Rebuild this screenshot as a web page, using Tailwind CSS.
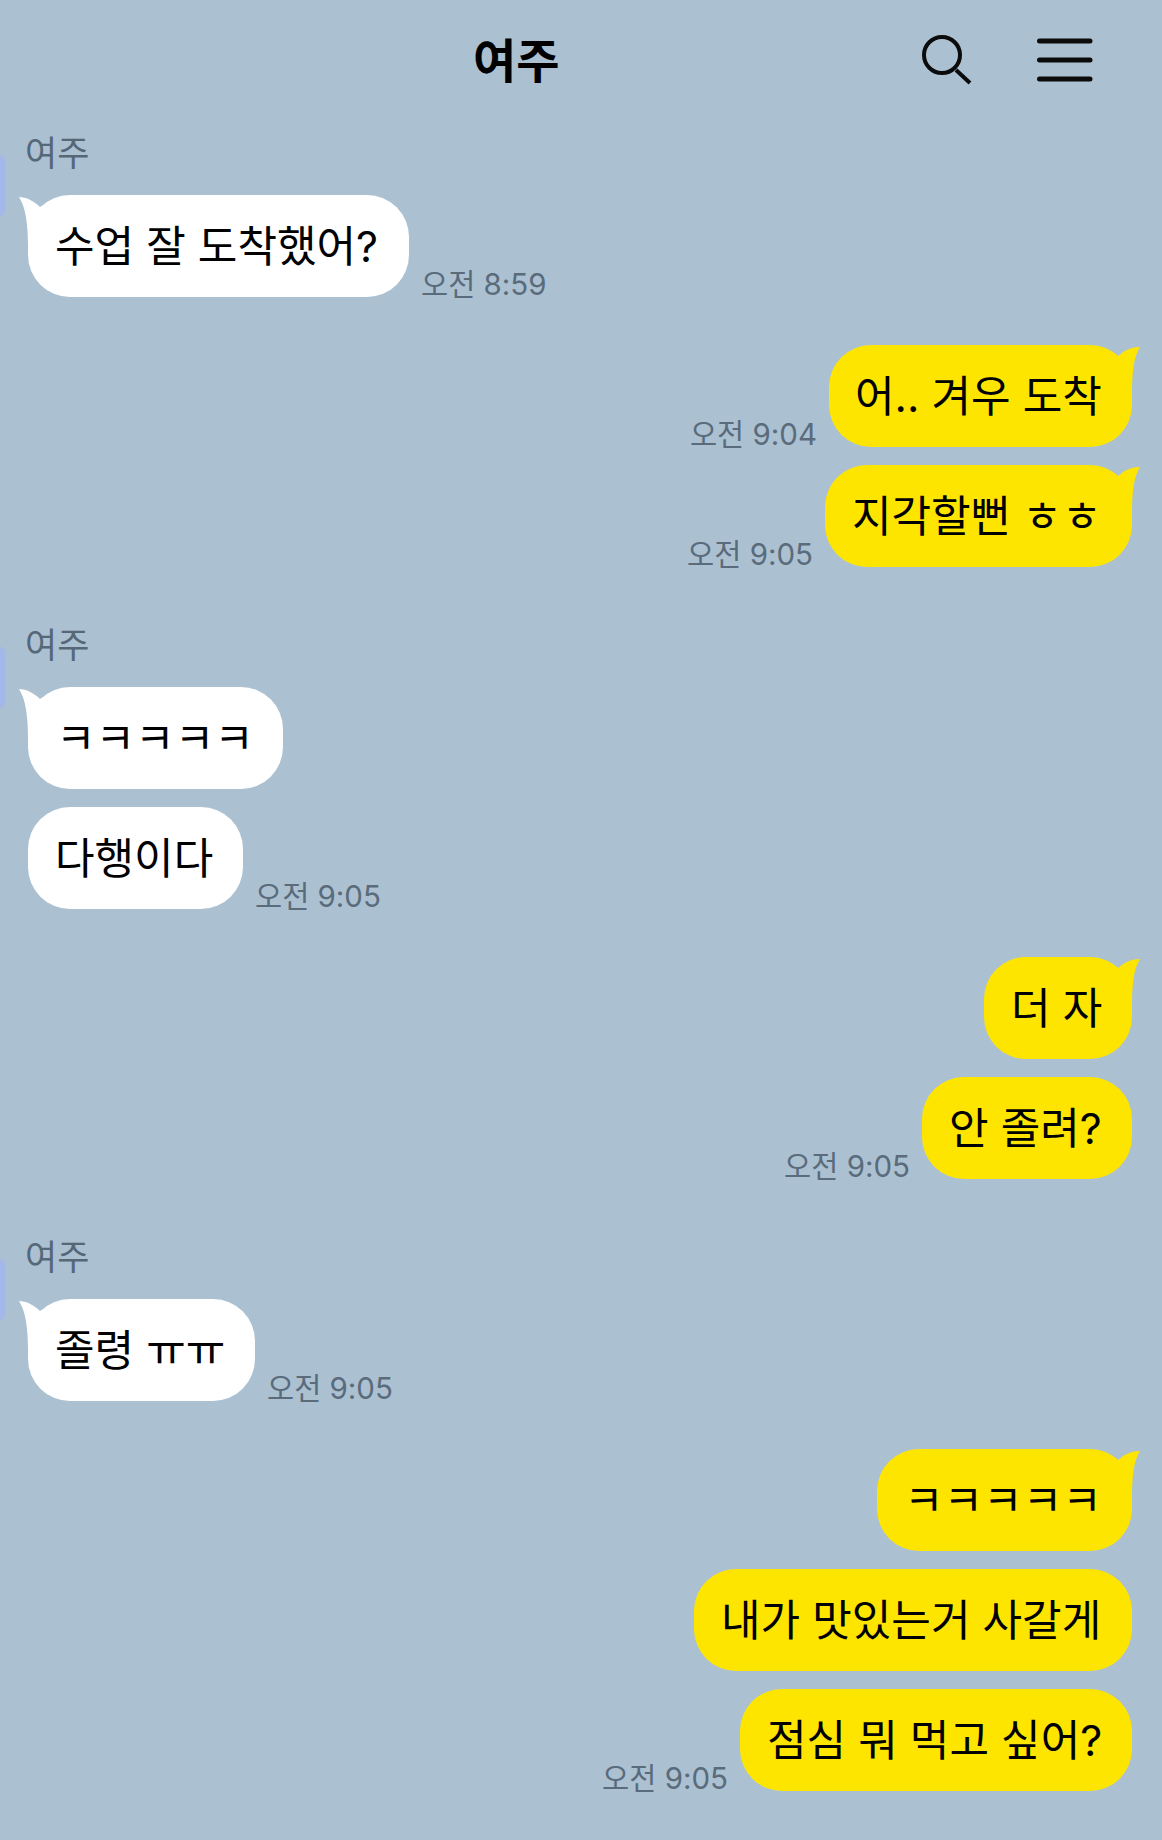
<!DOCTYPE html>
<html lang="ko">
<head>
    <meta charset="UTF-8">
    <meta name="viewport" content="width=device-width, initial-scale=1.0">
    <title>여주</title>
    <script src="https://cdn.jsdelivr.net/npm/@tailwindcss/browser@4"></script>
</head>
<body class="bg-[#abc1d2] font-['Inter','Noto_Sans_CJK_KR',sans-serif] text-black">
    <div class="w-[1162px] h-[1840px] overflow-hidden">
        <!-- header -->
        <header class="flex items-center h-[118px] pt-[2px] pl-[473px]">
            <h1 class="text-[47px] leading-none font-bold w-[83px] whitespace-nowrap">여주</h1>
            <svg class="ml-[365px]" width="54" height="54" viewBox="0 0 54 54" fill="none" stroke="#0b0b0b">
                <circle cx="21" cy="22" r="18" stroke-width="4"/>
                <path d="M35 37L49 50" stroke-width="4"/>
            </svg>
            <svg class="ml-[61px]" width="57" height="46" viewBox="0 0 57 46" fill="none" stroke="#0b0b0b" stroke-width="5" stroke-linecap="round">
                <path d="M3.5 4H54M3.5 23H54M3.5 42H54"/>
            </svg>
        </header>

        <!-- 1 -->
        <section class="relative pl-[28px] pt-[17px]">
            <div class="absolute left-0 top-[37px] w-[5px] h-[61px] rounded-r-[8px] bg-[#a3b7e8]"></div>
            <p class="-ml-[3px] text-[35px] leading-[36px] text-[#566778]">여주</p>
            <div class="flex items-end gap-[12px] mt-[24px]">
                <div class="relative w-[381px] h-[102px] rounded-[42px] bg-white flex items-center pl-[27px] text-[43px] whitespace-nowrap">
                    <svg class="absolute -left-[9px] top-[2px]" width="40" height="50" viewBox="0 0 40 50" fill="#fff"><path d="M0 0C7 0 15 4 21 10L40 0V50H9C9 28 7 11 0 0Z"/></svg>
                    <span class="relative">수업 잘 도착했어?</span>
                </div>
                <span class="text-[29.5px] leading-[30px] -mb-[2px] text-[#5a6b7b] whitespace-nowrap">오전 8:59</span>
            </div>
        </section>

        <!-- 2 -->
        <section class="flex flex-col items-end gap-[18px] pr-[30px] mt-[48px]">
            <div class="flex items-end gap-[12px]">
                <span class="text-[29.5px] leading-[30px] -mb-[2px] text-[#5a6b7b] whitespace-nowrap">오전 9:04</span>
                <div class="relative w-[303px] h-[102px] rounded-[42px] bg-[#fee500] flex items-center pl-[26px] text-[43px] whitespace-nowrap">
                    <svg class="absolute -right-[8px] top-[2px]" width="40" height="50" viewBox="0 0 40 50" fill="#fee500"><path d="M40 0C32 0 25 3 18 9L0 0V50H32C32 28 33 11 40 0Z"/></svg>
                    <span class="relative">어.. 겨우 도착</span>
                </div>
            </div>
            <div class="flex items-end gap-[12px]">
                <span class="text-[29.5px] leading-[30px] -mb-[2px] text-[#5a6b7b] whitespace-nowrap">오전 9:05</span>
                <div class="relative w-[307px] h-[102px] rounded-[42px] bg-[#fee500] flex items-center pl-[27px] text-[43px] whitespace-nowrap">
                    <svg class="absolute -right-[8px] top-[2px]" width="40" height="50" viewBox="0 0 40 50" fill="#fee500"><path d="M40 0C32 0 25 3 18 9L0 0V50H32C32 28 33 11 40 0Z"/></svg>
                    <span class="relative">지각할뻔 ㅎㅎ</span>
                </div>
            </div>
        </section>

        <!-- 3 -->
        <section class="relative pl-[28px] pt-[60px]">
            <div class="absolute left-0 top-[80px] w-[5px] h-[61px] rounded-r-[8px] bg-[#a3b7e8]"></div>
            <p class="-ml-[3px] text-[35px] leading-[36px] text-[#566778]">여주</p>
            <div class="flex flex-col items-start gap-[18px] mt-[24px]">
                <div class="relative w-[255px] h-[102px] rounded-[42px] bg-white flex items-center pl-[28px] text-[43px] whitespace-nowrap">
                    <svg class="absolute -left-[9px] top-[2px]" width="40" height="50" viewBox="0 0 40 50" fill="#fff"><path d="M0 0C7 0 15 4 21 10L40 0V50H9C9 28 7 11 0 0Z"/></svg>
                    <span class="relative">ㅋㅋㅋㅋㅋ</span>
                </div>
                <div class="flex items-end gap-[12px]">
                    <div class="w-[215px] h-[102px] rounded-[42px] bg-white flex items-center pl-[27px] text-[43px] whitespace-nowrap">다행이다</div>
                    <span class="text-[29.5px] leading-[30px] -mb-[2px] text-[#5a6b7b] whitespace-nowrap">오전 9:05</span>
                </div>
            </div>
        </section>

        <!-- 4 -->
        <section class="flex flex-col items-end gap-[18px] pr-[30px] mt-[48px]">
            <div class="relative w-[148px] h-[102px] rounded-[42px] bg-[#fee500] flex items-center pl-[27px] text-[43px] whitespace-nowrap">
                <svg class="absolute -right-[8px] top-[2px]" width="40" height="50" viewBox="0 0 40 50" fill="#fee500"><path d="M40 0C32 0 25 3 18 9L0 0V50H32C32 28 33 11 40 0Z"/></svg>
                <span class="relative">더 자</span>
            </div>
            <div class="flex items-end gap-[12px]">
                <span class="text-[29.5px] leading-[30px] -mb-[2px] text-[#5a6b7b] whitespace-nowrap">오전 9:05</span>
                <div class="w-[210px] h-[102px] rounded-[42px] bg-[#fee500] flex items-center pl-[27px] text-[43px] whitespace-nowrap">안 졸려?</div>
            </div>
        </section>

        <!-- 5 -->
        <section class="relative pl-[28px] pt-[60px]">
            <div class="absolute left-0 top-[80px] w-[5px] h-[61px] rounded-r-[8px] bg-[#a3b7e8]"></div>
            <p class="-ml-[3px] text-[35px] leading-[36px] text-[#566778]">여주</p>
            <div class="flex items-end gap-[12px] mt-[24px]">
                <div class="relative w-[227px] h-[102px] rounded-[42px] bg-white flex items-center pl-[27px] text-[43px] whitespace-nowrap">
                    <svg class="absolute -left-[9px] top-[2px]" width="40" height="50" viewBox="0 0 40 50" fill="#fff"><path d="M0 0C7 0 15 4 21 10L40 0V50H9C9 28 7 11 0 0Z"/></svg>
                    <span class="relative">졸령 ㅠㅠ</span>
                </div>
                <span class="text-[29.5px] leading-[30px] -mb-[2px] text-[#5a6b7b] whitespace-nowrap">오전 9:05</span>
            </div>
        </section>

        <!-- 6 -->
        <section class="flex flex-col items-end gap-[18px] pr-[30px] mt-[48px]">
            <div class="relative w-[255px] h-[102px] rounded-[42px] bg-[#fee500] flex items-center pl-[27px] text-[43px] whitespace-nowrap">
                <svg class="absolute -right-[8px] top-[2px]" width="40" height="50" viewBox="0 0 40 50" fill="#fee500"><path d="M40 0C32 0 25 3 18 9L0 0V50H32C32 28 33 11 40 0Z"/></svg>
                <span class="relative">ㅋㅋㅋㅋㅋ</span>
            </div>
            <div class="w-[438px] h-[102px] rounded-[42px] bg-[#fee500] flex items-center pl-[27px] text-[43px] whitespace-nowrap">내가 맛있는거 사갈게</div>
            <div class="flex items-end gap-[12px]">
                <span class="text-[29.5px] leading-[30px] -mb-[2px] text-[#5a6b7b] whitespace-nowrap">오전 9:05</span>
                <div class="w-[392px] h-[102px] rounded-[42px] bg-[#fee500] flex items-center pl-[27px] text-[43px] whitespace-nowrap">점심 뭐 먹고 싶어?</div>
            </div>
        </section>
    </div>
</body>
</html>
